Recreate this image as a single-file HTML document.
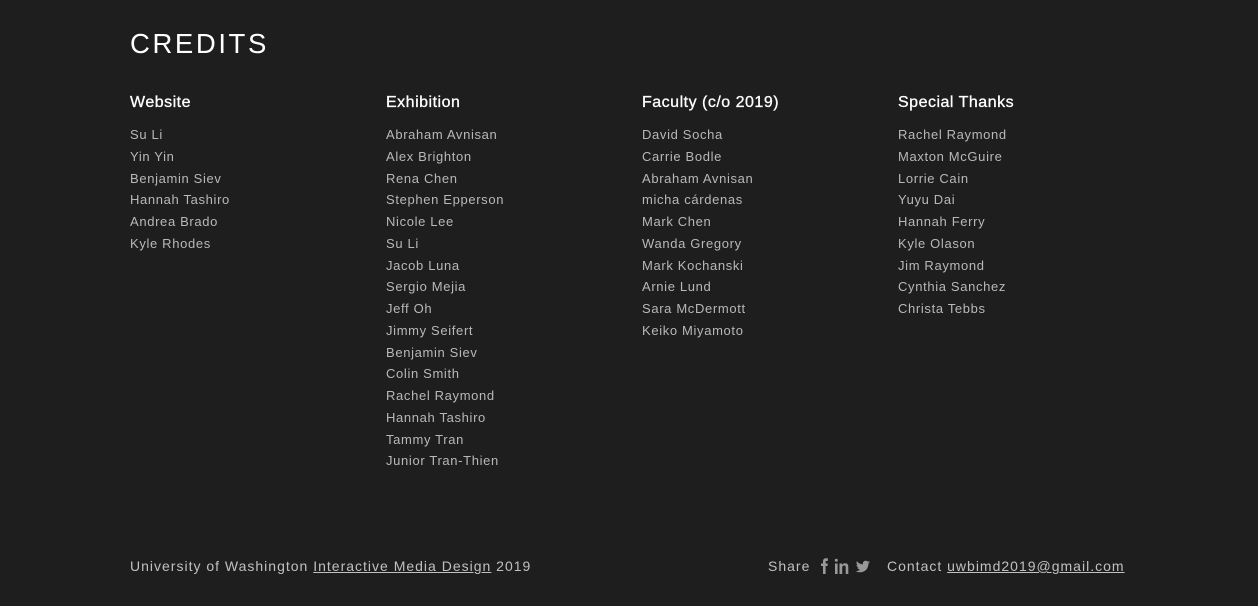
<!DOCTYPE html>
<html><head><meta charset="utf-8"><style>
body{margin:0;background:#1e1e1e;width:1258px;height:606px;overflow:hidden;font-family:"Liberation Sans",sans-serif;position:relative}
h1{position:absolute;left:130px;top:28px;margin:0;font-size:27.5px;font-weight:normal;color:#fff;letter-spacing:2.6px}
.col{position:absolute;top:94px;width:256px}
.col h2{margin:0 0 12px;font-size:16px;font-weight:normal;color:#fff;letter-spacing:0.5px;line-height:18px;-webkit-text-stroke:0.3px #fff}
.col div{font-size:13px;color:#b8b8b8;letter-spacing:0.65px;line-height:21.75px}
.foot{position:absolute;top:558px;font-size:14px;color:#c0c0c0;letter-spacing:1px}
.foot u{text-decoration:underline}
</style></head><body>
<h1>CREDITS</h1>
<div class="col" style="left:130px"><h2>Website</h2><div>Su Li<br>Yin Yin<br>Benjamin Siev<br>Hannah Tashiro<br>Andrea Brado<br>Kyle Rhodes</div></div>
<div class="col" style="left:386px"><h2>Exhibition</h2><div>Abraham Avnisan<br>Alex Brighton<br>Rena Chen<br>Stephen Epperson<br>Nicole Lee<br>Su Li<br>Jacob Luna<br>Sergio Mejia<br>Jeff Oh<br>Jimmy Seifert<br>Benjamin Siev<br>Colin Smith<br>Rachel Raymond<br>Hannah Tashiro<br>Tammy Tran<br>Junior Tran-Thien</div></div>
<div class="col" style="left:642px"><h2>Faculty (c/o 2019)</h2><div>David Socha<br>Carrie Bodle<br>Abraham Avnisan<br>micha cárdenas<br>Mark Chen<br>Wanda Gregory<br>Mark Kochanski<br>Arnie Lund<br>Sara McDermott<br>Keiko Miyamoto</div></div>
<div class="col" style="left:898px"><h2>Special Thanks</h2><div>Rachel Raymond<br>Maxton McGuire<br>Lorrie Cain<br>Yuyu Dai<br>Hannah Ferry<br>Kyle Olason<br>Jim Raymond<br>Cynthia Sanchez<br>Christa Tebbs</div></div>
<div class="foot" style="left:130px">University of Washington <u>Interactive Media Design</u> 2019</div>
<div class="foot" style="left:768px">Share</div>
<svg width="52" height="18" viewBox="0 0 52 18" style="position:absolute;left:818px;top:557px">
<path d="M5 17V9H3V6.5h2V4.5C5 2.5 6 1.3 8 1.3H9.8V4H8.5C7.8 4 7.6 4.3 7.6 4.9V6.5h2.2l-.3 2.5H7.6V17z" fill="#999"/>
<rect x="17" y="6.5" width="2.6" height="10.5" fill="#999"/><circle cx="18.3" cy="3.3" r="1.5" fill="#999"/>
<path d="M21.5 6.5h2.5v1.5c.5-1 1.6-1.7 3.1-1.7 2.5 0 3.2 1.5 3.2 3.8V17h-2.6V10.5c0-1.3-.3-2-1.5-2-1.3 0-2 .9-2 2.1V17h-2.7z" fill="#999"/>
<path d="M52 5c-.6.3-1.1.4-1.700.5.6-.4 1.100-1 1.300-1.6-.6.3-1.2.6-1.8.7-.5-.6-1.3-.9-2.1-.9-1.6 0-2.9 1.3-2.9 2.9 0 .2 0 .4.1.7-2.4-.1-4.6-1.3-6-3.1-.3.4-.4.9-.4 1.5 0 1 .5 1.9 1.3 2.4-.5 0-.9-.1-1.3-.4 0 1.4 1 2.6 2.3 2.9-.4.1-.9.1-1.3 0 .4 1.2 1.4 2 2.7 2-1.3 1-3 1.6-4.6 1.4 1.3.8 2.8 1.3 4.5 1.3 5.3 0 8.3-4.4 8.300-8.3v-.4c.6-.4 1.100-.9 1.500-1.6z" fill="#999"/>
</svg>
<div class="foot" style="left:887px">Contact <u>uwbimd2019@gmail.com</u></div>
</body></html>
